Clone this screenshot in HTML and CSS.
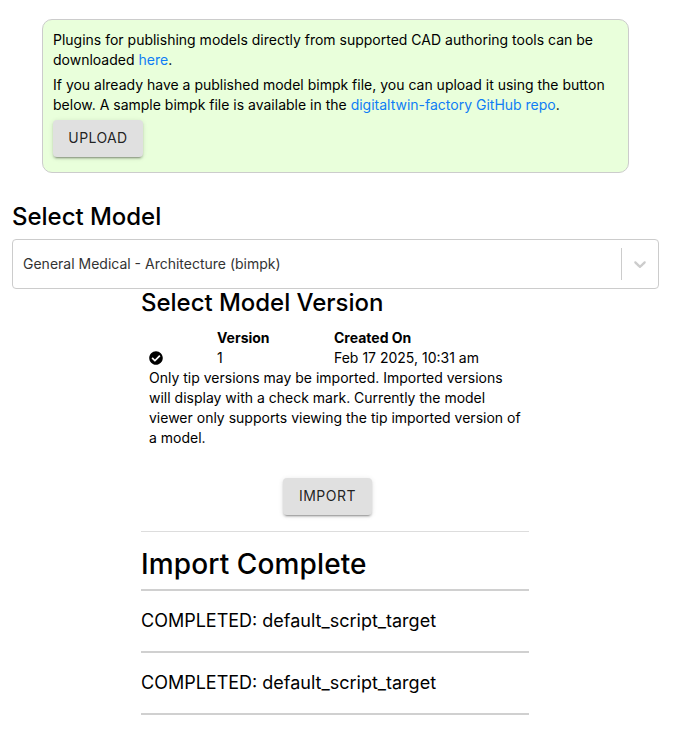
FILE: index.html
```html
<!DOCTYPE html>
<html lang="en">
<head>
<meta charset="utf-8">
<title>Import Model</title>
<link rel="stylesheet" href="styles.css">
</head>
<body>
<section class="notice">
  <p>Plugins for publishing models directly from supported CAD authoring tools can be downloaded <a href="#">here</a>.</p>
  <p>If you already have a published model bimpk file, you can upload it using the button below. A sample bimpk file is available in the <a href="#">digitaltwin-factory GitHub repo</a>.</p>
  <button class="btn">UPLOAD</button>
</section>
<h2 class="model-title">Select Model</h2>
<div class="select">
  <span class="select-value">General Medical - Architecture (bimpk)</span>
  <span class="select-separator"></span>
  <span class="select-arrow"><svg width="20" height="20" viewBox="0 0 20 20"><path d="M4.516 7.548c0.436-0.446 1.043-0.481 1.576 0l3.908 3.747 3.908-3.747c0.533-0.481 1.141-0.446 1.574 0 0.436 0.445 0.408 1.197 0 1.615-0.406 0.418-4.695 4.502-4.695 4.502-0.217 0.223-0.502 0.335-0.787 0.335s-0.57-0.112-0.789-0.335c0 0-4.287-4.084-4.695-4.502s-0.436-1.17 0-1.615z"/></svg></span>
</div>
<main class="column">
  <h2>Select Model Version</h2>
  <div class="versions">
    <div class="row head"><span></span><span>Version</span><span>Created On</span></div>
    <div class="row">
      <svg class="check" viewBox="0 0 512 512"><path d="M504 256c0 136.967-111.033 248-248 248S8 392.967 8 256 119.033 8 256 8s248 111.033 248 248zM227.314 387.314l184-184c6.248-6.248 6.248-16.379 0-22.627l-22.627-22.627c-6.248-6.249-16.379-6.249-22.628 0L216 308.118l-70.059-70.059c-6.248-6.248-16.379-6.248-22.628 0l-22.627 22.627c-6.248 6.248-6.248 16.379 0 22.627l104 104c6.249 6.249 16.379 6.249 22.628.001z"/></svg>
      <span>1</span><span>Feb 17 2025, 10:31 am</span>
    </div>
    <p>Only tip versions may be imported. Imported versions will display with a check mark. Currently the model viewer only supports viewing the tip imported version of a model.</p>
  </div>
  <div class="actions"><button class="btn">IMPORT</button></div>
  <h1>Import Complete</h1>
  <div class="job">COMPLETED: default_script_target</div>
  <div class="job">COMPLETED: default_script_target</div>
</main>
</body>
</html>
```
FILE: styles.css
```css
* { box-sizing: border-box; }
body { margin: 0; padding: 19px 18px 0 12px; font: 14px/20px Inter, sans-serif; color: #000; background: #fff; }
p, h1, h2 { margin: 0; }
a { color: #0f7df5; text-decoration: none; }
.notice { width: 587px; height: 154px; margin-left: 30px; padding: 10px; border: 1px solid #ccc; border-radius: 10px; background: #e9ffdb; }
.notice p { margin-bottom: 5px; }
.btn { display: block; width: 90px; height: 37px; padding: 0 0 2px; border: 0; border-radius: 4px; background: #e0e0e0; color: rgba(0, 0, 0, .87); font: 400 14px/24px Inter, sans-serif; letter-spacing: .4px; box-shadow: 0 3px 1px -2px rgba(0,0,0,.2), 0 2px 2px rgba(0,0,0,.14), 0 1px 5px rgba(0,0,0,.12); }
h2 { font-size: 24px; line-height: 28px; font-weight: 500; letter-spacing: -.03px; }
.model-title { margin-top: 30px; }
.select { display: flex; align-items: center; height: 50px; margin-top: 8px; border: 1px solid #ccc; border-radius: 4px; }
.select-value { flex: 1; padding-left: 10px; color: #333; }
.select-separator { width: 1px; height: 32px; background: #ccc; }
.select-arrow { display: flex; padding: 8px; fill: #ccc; }
.column { width: 388px; margin-left: 129px; }
.versions { padding: 11px 8px 0; }
.row { display: grid; grid-template-columns: 68px 117px 1fr; align-items: center; height: 20px; }
.head { font-weight: 700; }
.check { width: 14px; height: 14px; }
.actions { display: flex; justify-content: center; margin-top: 30px; padding: 0 15px 16px 0; border-bottom: 1px solid #ddd; }
.actions .btn { width: 89px; letter-spacing: .5px; }
h1 { margin-top: 15px; padding-bottom: 8px; border-bottom: 2px solid #d0d0d0; font-size: 28px; line-height: 34px; font-weight: 500; letter-spacing: .12px; }
.job { height: 62px; border-bottom: 2px solid #d0d0d0; font-size: 18px; line-height: 60px; }
```
